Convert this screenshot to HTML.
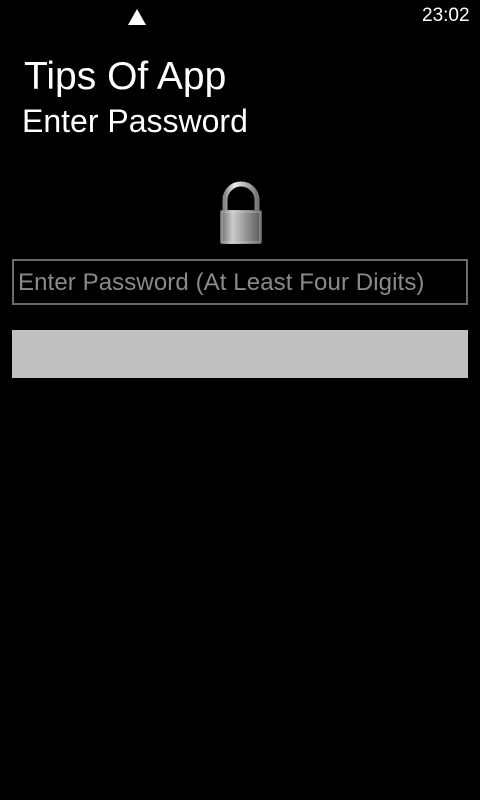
<!DOCTYPE html>
<html><head><style>
body{margin:0;width:480px;height:800px;background:#000;overflow:hidden;font-family:"Liberation Sans",sans-serif;color:#fff;position:relative}
.a{position:absolute;white-space:nowrap}
</style></head><body>
<div class="a" style="left:128px;top:9px;width:0;height:0;border-left:9px solid transparent;border-right:9px solid transparent;border-bottom:16px solid #fff"></div>
<div class="a" style="left:422px;top:5px;font-size:19px">23:02</div>
<div class="a" style="left:24px;top:55px;font-size:39px">Tips Of App</div>
<div class="a" style="left:22px;top:103px;font-size:32px">Enter Password</div>
<svg class="a" style="left:215px;top:180px" width="52" height="68" viewBox="0 0 52 68">
<defs><linearGradient id="b" x1="0" x2="1"><stop offset="0" stop-color="#666"/><stop offset=".3" stop-color="#ccc"/><stop offset=".6" stop-color="#999"/><stop offset="1" stop-color="#555"/></linearGradient>
<linearGradient id="s" x1="0" x2="1"><stop offset="0" stop-color="#888"/><stop offset=".3" stop-color="#eee"/><stop offset="1" stop-color="#777"/></linearGradient></defs>
<path d="M10 32 V20 A16 16 0 0 1 42 20 V32" fill="none" stroke="url(#s)" stroke-width="5"/>
<rect x="5" y="30" width="42" height="34" rx="2" fill="url(#b)"/>
<rect x="7" y="32" width="38" height="30" fill="none" stroke="#ddd" stroke-width="1" opacity=".5"/>
</svg>
<div class="a" style="left:12px;top:259px;width:452px;height:42px;border:2px solid #6a6a6a"></div>
<div class="a" style="left:18px;top:269px;font-size:24px;color:#8a8a8a;letter-spacing:0.1px">Enter Password (At Least Four Digits)</div>
<div class="a" style="left:12px;top:330px;width:456px;height:48px;background:#c0c0c0"></div>
</body></html>
